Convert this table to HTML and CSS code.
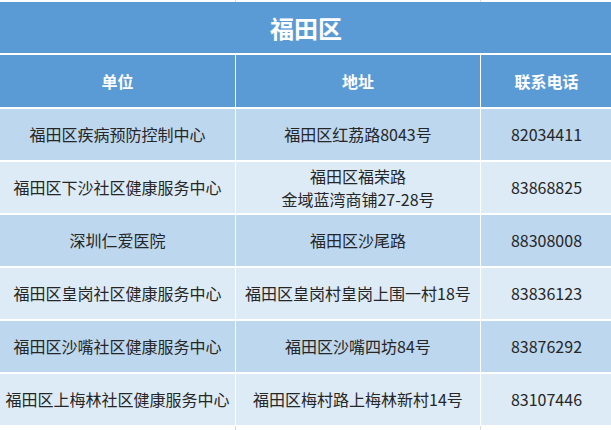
FILE: index.html
```
<!DOCTYPE html>
<html lang="zh-CN">
<head>
<meta charset="utf-8">
<link rel="stylesheet" href="styles.css">
</head>
<body>
<div class="sheet">
  <div class="title">福田区</div>
  <div class="cell head">单位</div>
  <div class="cell head">地址</div>
  <div class="cell head">联系电话</div>

  <div class="cell odd">福田区疾病预防控制中心</div>
  <div class="cell odd">福田区红荔路8043号</div>
  <div class="cell odd">82034411</div>

  <div class="cell even">福田区下沙社区健康服务中心</div>
  <div class="cell even">福田区福荣路<br>金域蓝湾商铺27-28号</div>
  <div class="cell even">83868825</div>

  <div class="cell odd">深圳仁爱医院</div>
  <div class="cell odd">福田区沙尾路</div>
  <div class="cell odd">88308008</div>

  <div class="cell even">福田区皇岗社区健康服务中心</div>
  <div class="cell even">福田区皇岗村皇岗上围一村18号</div>
  <div class="cell even">83836123</div>

  <div class="cell odd">福田区沙嘴社区健康服务中心</div>
  <div class="cell odd">福田区沙嘴四坊84号</div>
  <div class="cell odd">83876292</div>

  <div class="cell even">福田区上梅林社区健康服务中心</div>
  <div class="cell even">福田区梅村路上梅林新村14号</div>
  <div class="cell even">83107446</div>

  <div class="bottom"><span class="cut"></span><span class="cut"></span><span class="cut"></span></div>
</div>
</body>
</html>
```
FILE: styles.css
```
html, body {
  margin: 0;
  padding: 0;
  background: #ffffff;
}
body {
  font-family: "Microsoft YaHei", "Noto Sans CJK SC", "Noto Sans", sans-serif;
  width: 611px;
  height: 430px;
  overflow: hidden;
}
.sheet {
  display: grid;
  grid-template-columns: 235px 244px 131px;
  grid-template-rows: 51px 52px repeat(6, 51px) 5px;
  column-gap: 1px;
  row-gap: 2px;
  padding-top: 2px;
  background-color: #ffffff;
  background-image: linear-gradient(to right,
    #ffffff 235px, #dcdcdc 235px, #dcdcdc 236px, #ffffff 236px,
    #ffffff 480px, #dcdcdc 480px, #dcdcdc 481px, #ffffff 481px);
  background-size: 100% 2px;
  background-repeat: no-repeat;
}
.bottom {
  grid-column: 1 / -1;
  display: grid;
  grid-template-columns: 235px 244px 131px;
  column-gap: 1px;
  background: #dcdcdc;
  margin-top: -1px;
}
.cut { background: #ffffff; }
.title {
  grid-column: 1 / -1;
  background: #5b9bd5;
  color: #ffffff;
  font-weight: bold;
  font-size: 24px;
  display: flex;
  align-items: center;
  justify-content: center;
}
.cell {
  display: flex;
  align-items: center;
  justify-content: center;
  text-align: center;
  font-size: 16px;
  line-height: 23px;
  color: #262626;
  white-space: nowrap;
}
.head {
  background: #5b9bd5;
  color: #ffffff;
  font-weight: bold;
}
.odd { background: #bdd7ee; }
.even { background: #ddebf7; }
```
